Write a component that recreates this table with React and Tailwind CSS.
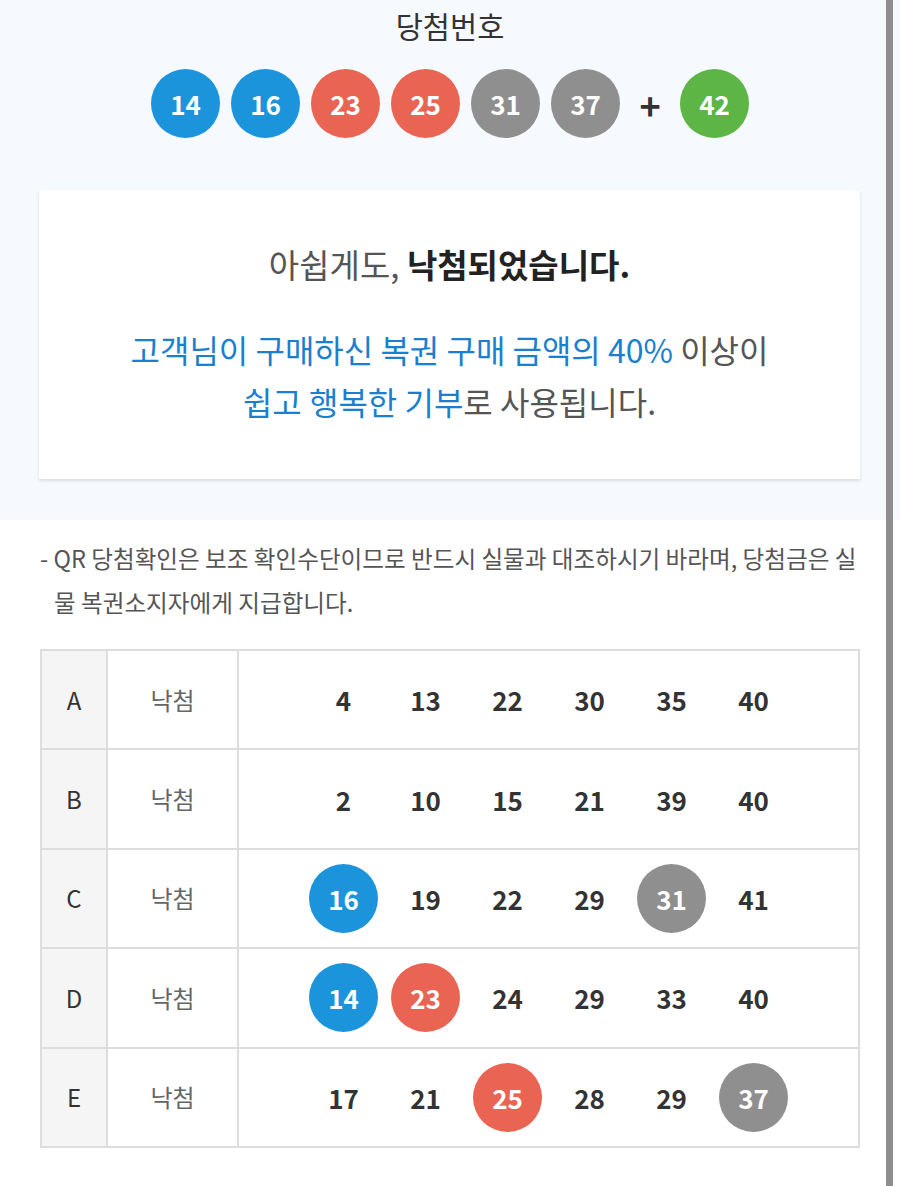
const WIN = [14, 16, 23, 25, 31, 37];
const BONUS = 42;

const ROWS = [
  { label: "A", result: "낙첨", nums: [4, 13, 22, 30, 35, 40] },
  { label: "B", result: "낙첨", nums: [2, 10, 15, 21, 39, 40] },
  { label: "C", result: "낙첨", nums: [16, 19, 22, 29, 31, 41] },
  { label: "D", result: "낙첨", nums: [14, 23, 24, 29, 33, 40] },
  { label: "E", result: "낙첨", nums: [17, 21, 25, 28, 29, 37] },
];

// lotto ball colours by range
const ballColor = (n) => {
  if (n <= 10) return "bg-[#f5b800]";
  if (n <= 20) return "bg-[#1b94dc]";
  if (n <= 30) return "bg-[#e96453]";
  if (n <= 40) return "bg-[#8f8f8f]";
  return "bg-[#5cb544]";
};

const Ball = ({ n }) => (
  <span
    className={`flex h-[69px] w-[69px] items-center justify-center rounded-full text-[26px] font-bold text-white ${ballColor(n)}`}
  >
    {n}
  </span>
);

export default function App() {
  return (
    <div className="relative h-[1186px] w-[900px] overflow-hidden bg-white font-['Noto_Sans_CJK_KR','Noto_Sans',sans-serif] text-[#333]">
      {/* winning numbers */}
      <section className="bg-[#f6f9fe] px-[39px] pb-[41px]">
        <h2 className="text-center text-[29.5px] font-normal leading-[50px] text-[#333]">
          당첨번호
        </h2>
        <div className="mt-[19px] flex items-center justify-center gap-[11px]">
          {WIN.map((n) => (
            <Ball key={n} n={n} />
          ))}
          <span className="w-[38px] text-center text-[36px] font-bold leading-none text-[#333]">
            +
          </span>
          <Ball n={BONUS} />
        </div>

        <div className="mt-[52px] flex h-[289px] w-[821px] flex-col items-center bg-white pt-[52px] text-center shadow-[0_2px_3px_rgba(0,0,0,0.12)]">
          <p className="text-[33px] leading-[44px] text-[#555]">
            아쉽게도, <b className="font-bold text-[#222]">낙첨되었습니다.</b>
          </p>
          <p className="mt-[37px] text-[32px] leading-[52px] text-[#555]">
            <span className="text-[#1a7fcf]">
              고객님이 구매하신 복권 구매 금액의 40%
            </span>{" "}
            이상이
            <br />
            <span className="text-[#1a7fcf]">쉽고 행복한 기부</span>로
            사용됩니다.
          </p>
        </div>
      </section>

      {/* notice + my numbers */}
      <section className="px-[40px] pt-[16px]">
        <div className="whitespace-nowrap text-[23.6px] leading-[44px] text-[#555]">
          <p>
            - QR 당첨확인은 보조 확인수단이므로 반드시 실물과 대조하시기
            바라며, 당첨금은 실
          </p>
          <p className="pl-[14px]">물 복권소지자에게 지급합니다.</p>
        </div>

        <table className="mt-[25px] w-[820px] table-fixed border-collapse border-2 border-[#dddddd]">
          <colgroup>
            <col className="w-[66px]" />
            <col className="w-[131px]" />
            <col />
          </colgroup>
          <tbody>
            {ROWS.map((row) => (
              <tr key={row.label} className="h-[99.4px]">
                <td className="border-2 border-[#dddddd] bg-[#f5f5f5] text-center text-[24px] text-[#333]">
                  {row.label}
                </td>
                <td className="border-2 border-[#dddddd] text-center text-[24px] text-[#666]">
                  {row.result}
                </td>
                <td className="border-2 border-[#dddddd]">
                  <div className="flex items-center justify-center">
                    {row.nums.map((n, i) =>
                      WIN.includes(n) ? (
                        <span key={i} className="flex w-[82px] justify-center">
                          <Ball n={n} />
                        </span>
                      ) : (
                        <span
                          key={i}
                          className="w-[82px] text-center text-[26px] font-bold text-[#333]"
                        >
                          {n}
                        </span>
                      )
                    )}
                  </div>
                </td>
              </tr>
            ))}
          </tbody>
        </table>
      </section>

      {/* scrollbar thumb */}
      <div className="absolute right-[7px] top-0 h-full w-[7px] bg-[#8e8e8e]" />
    </div>
  );
}
